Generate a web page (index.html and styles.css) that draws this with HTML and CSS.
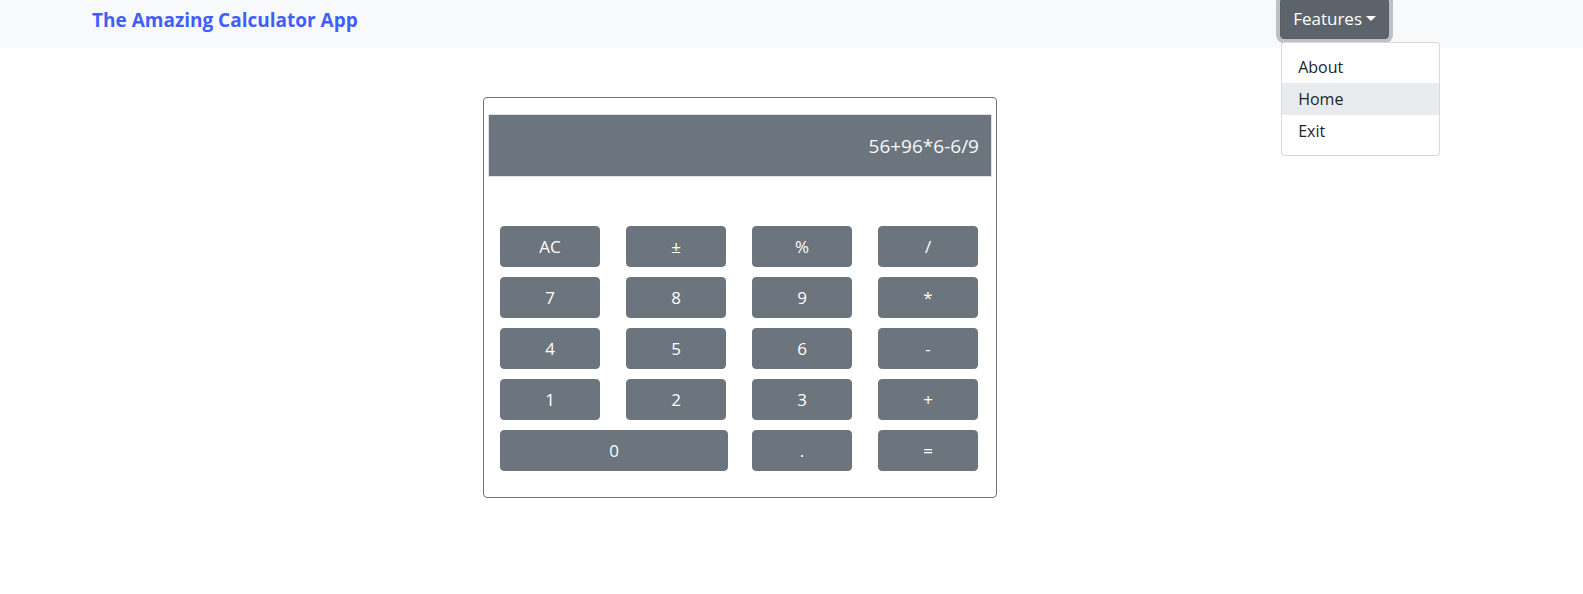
FILE: index.html
```html
<!DOCTYPE html>
<html lang="en">
<head>
<meta charset="utf-8">
<title>The Amazing Calculator App</title>
<link rel="stylesheet" href="styles.css">
</head>
<body>
<nav class="navbar">
  <a class="brand" href="#">The Amazing Calculator App</a>
  <div class="dropdown">
    <button class="dd-toggle" type="button">Features</button>
    <ul class="dd-menu">
      <li><a class="dd-item" href="#">About</a></li>
      <li><a class="dd-item active" href="#">Home</a></li>
      <li><a class="dd-item" href="#">Exit</a></li>
    </ul>
  </div>
</nav>
<main class="calc">
  <div class="display">56+96*6-6/9</div>
  <div class="keys">
    <button class="key">AC</button>
    <button class="key">±</button>
    <button class="key">%</button>
    <button class="key">/</button>
    <button class="key">7</button>
    <button class="key">8</button>
    <button class="key">9</button>
    <button class="key">*</button>
    <button class="key">4</button>
    <button class="key">5</button>
    <button class="key">6</button>
    <button class="key">-</button>
    <button class="key">1</button>
    <button class="key">2</button>
    <button class="key">3</button>
    <button class="key">+</button>
    <button class="key key-wide">0</button>
    <button class="key">.</button>
    <button class="key">=</button>
  </div>
</main>
</body>
</html>
```

FILE: styles.css
```css
* { box-sizing: border-box; }
body {
  margin: 0;
  font-family: "Open Sans", "Noto Sans", "Liberation Sans", sans-serif;
  font-size: 16px;
  color: #212529;
  background: #fff;
}
.navbar {
  display: flex;
  justify-content: space-between;
  align-items: flex-start;
  height: 48px;
  padding: 0 194px 0 92px;
  background: #f8f9fa;
}
.brand {
  margin-top: 5px;
  font-size: 19px;
  line-height: 30px;
  font-weight: 700;
  color: #3f5efb;
  text-decoration: none;
}
.dropdown {
  position: relative;
  margin-top: -2px;
}
.dd-toggle {
  display: flex;
  align-items: center;
  height: 41px;
  padding: 0 12px;
  font-family: inherit;
  font-size: 17px;
  line-height: 24px;
  color: #fff;
  background: #5c636a;
  border: 1px solid #565e64;
  border-radius: 4px;
  box-shadow: 0 0 0 4px rgba(130, 138, 145, 0.5);
}
.dd-toggle::after {
  content: "";
  margin-left: 4px;
  border-top: 5px solid #fff;
  border-left: 5px solid transparent;
  border-right: 5px solid transparent;
}
.dd-menu {
  position: absolute;
  top: 44px;
  left: 1px;
  width: 159px;
  margin: 0;
  padding: 8px 0;
  list-style: none;
  background: #fff;
  border: 1px solid rgba(0, 0, 0, 0.15);
  border-radius: 4px;
}
.dd-item {
  display: block;
  padding: 4px 16px;
  line-height: 24px;
  color: #212529;
  text-decoration: none;
}
.dd-item.active {
  background: #e9ecef;
}
.calc {
  width: 514px;
  margin: 49px 0 0 483px;
  padding: 16px 4px 26px 4px;
  border: 1px solid #6c757d;
  border-radius: 4px;
}
.display {
  display: flex;
  align-items: center;
  justify-content: flex-end;
  height: 63px;
  padding-right: 12px;
  font-size: 19px;
  color: #f8f9fa;
  background: #6c757d;
  border: 1px solid #dee2e6;
}
.keys {
  display: grid;
  grid-template-columns: repeat(4, 100px);
  column-gap: 26px;
  row-gap: 10px;
  margin: 49px 0 0 12px;
}
.key {
  height: 41px;
  padding: 0;
  font-family: inherit;
  font-size: 17px;
  color: #fff;
  background: #6c757d;
  border: 1px solid #6c757d;
  border-radius: 4px;
}
.key-wide {
  grid-column: span 2;
  width: 228px;
}
```
